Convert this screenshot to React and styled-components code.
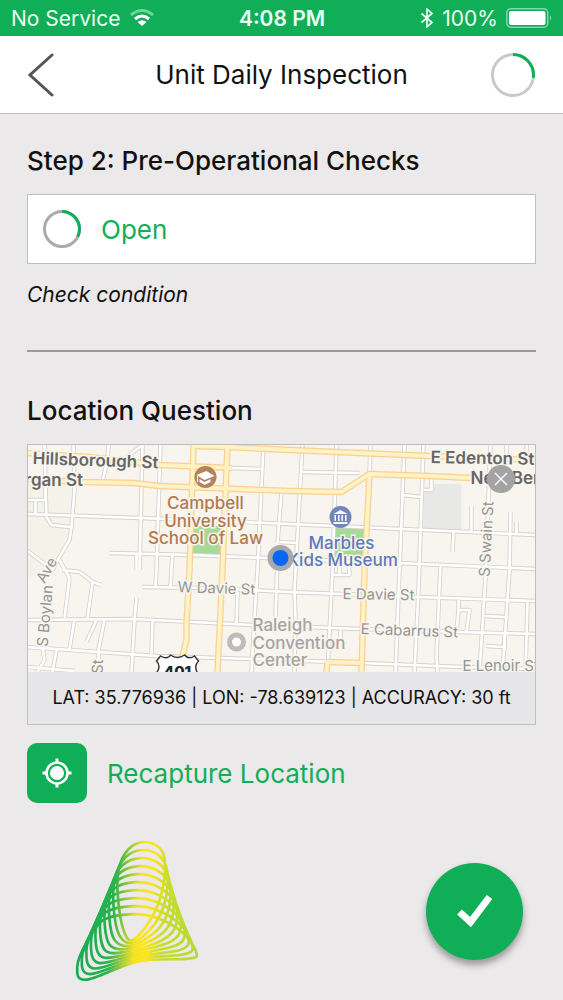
import React from "react";
import styled, { createGlobalStyle } from "styled-components";

const GREEN = "#11ae58";

const streets = [
  "M45 445L46 487L47 517L52 525L71 527",
  "M74 445L75 490L72 527L70 540L60 557L53 570",
  "M109 445L108 460L103 481",
  "M143 445L140 570M143 445L127 457",
  "M161 445L157 570L156 587",
  "M173 553L171 587",
  "M264 445L258 570L255 617L252 672",
  "M282 492L278 543M278 560L276 617",
  "M232 468L263 469",
  "M27 514L167 519L290 524L470 532L536 535",
  "M110 553L193 555L267 558L398 563L536 569",
  "M27 500H46V487M36 500V514M27 550L53 570",
  "M27 620L133 619L253 625L360 629L460 632L536 634",
  "M27 647L157 656L253 659L362 663L463 667L536 669",
  "M27 667L75 671",
  "M143 587L207 588L290 592L343 594L417 597L536 601",
  "M60 560L70 578L65 618M63 570L80 572L93 582L102 585M93 583L88 618",
  "M75 619L70 649M97 620L87 642M105 620L99 650V672",
  "M137 555V570M137 598L135 620L132 672M153 621L152 654",
  "M43 648L45 660L38 672M57 650L53 672",
  "M238 592L237 623",
  "M303 445L295 590L296 620L295 672",
  "M337 445L333 570L328 672",
  "M371 445L370 474",
  "M405 445L400 570L396 672",
  "M424 445L419 590L415 672",
  "M441 565L437 655L438 672",
  "M424 490H432V477M403 495L422 497",
  "M303 472L360 473M280 542L298 543",
  "M472 506V532M454 532L453 552M517 522V534",
  "M511 512L510 570L503 672",
  "M491 445L486 577L480 672M507 445V456M527 445V456",
  "M459 600V610H470L467 632M459 610L457 632",
  "M485 616L506 617M487 646L504 647M505 634V650",
  "M528 602L526 672",
  "M333 575H350L349 561M340 561V575M341 630V638",
];

const avenues = [
  "M27 453L90 457L160 465L232 468",
  "M193 446L228 447L290 450L430 456L536 460",
  "M27 479L83 482L135 483L160 486L290 491L342 492L370 474L430 476L472 478L536 480",
  "M194 445L190 570L187 623V640L182 660L178 672",
  "M228 445L223 570L218 672",
  "M370 474L365 570L362 672",
  "M327 662L362 663M328 662L327 672",
];

// corner points of the first and last rings of the logo
const innerRing = [
  [252, 53], [298, 70], [315, 115], [305, 205], [272, 285],
  [218, 348], [190, 315], [174, 220], [176, 135], [205, 75],
];
const outerRing = [
  [205, 270], [285, 279], [368, 325], [409, 385], [385, 403],
  [235, 411], [78, 466], [52, 425], [82, 350], [128, 288],
];

function ringPath(t) {
  const p = innerRing.map(([x, y], i) => [
    x + (outerRing[i][0] - x) * t,
    y + (outerRing[i][1] - y) * t,
  ]);
  const n = p.length;
  let d = `M${p[0][0]} ${p[0][1]}`;
  for (let i = 0; i < n; i++) {
    const a = p[(i + n - 1) % n];
    const b = p[i];
    const c = p[(i + 1) % n];
    const e = p[(i + 2) % n];
    d += `C${b[0] + (c[0] - a[0]) / 6} ${b[1] + (c[1] - a[1]) / 6} ${c[0] - (e[0] - b[0]) / 6} ${c[1] - (e[1] - b[1]) / 6} ${c[0]} ${c[1]}`;
  }
  return d + "Z";
}

function Progress({ size, value, track, thickness }) {
  const r = (size - thickness) / 2;
  const length = 2 * Math.PI * r;
  return (
    <svg width={size} height={size} viewBox={`0 0 ${size} ${size}`} fill="none" strokeWidth={thickness}>
      <circle cx={size / 2} cy={size / 2} r={r} stroke={track} />
      <circle
        cx={size / 2}
        cy={size / 2}
        r={r}
        stroke={GREEN}
        strokeDasharray={`${length * value} ${length}`}
        transform={`rotate(-90 ${size / 2} ${size / 2})`}
      />
    </svg>
  );
}

function Logo() {
  return (
    <svg width="160" height="150" viewBox="0 35 480 450" fill="none" role="img" aria-label="Logo">
      <defs>
        <linearGradient id="rings" gradientUnits="userSpaceOnUse" x1="50" y1="400" x2="410" y2="432">
          <stop offset="0" stopColor="#12ad52" />
          <stop offset="0.26" stopColor="#28b24b" />
          <stop offset="0.38" stopColor="#a0ce38" />
          <stop offset="0.47" stopColor="#f6e31e" />
          <stop offset="0.57" stopColor="#fbe41c" />
          <stop offset="0.7" stopColor="#c6dd2c" />
          <stop offset="1" stopColor="#b5d838" />
        </linearGradient>
      </defs>
      <g stroke="url(#rings)" strokeWidth="8">
        {Array.from({ length: 10 }, (_, i) => (
          <path key={i} d={ringPath(i / 9)} />
        ))}
      </g>
    </svg>
  );
}

function CityMap() {
  return (
    <MapArt viewBox="28 445 508 227" preserveAspectRatio="xMidYMid slice" role="img" aria-label="Map of downtown Raleigh">
      <rect x="28" y="445" width="508" height="227" fill="#f8f4ee" />
      <path d="M28 480H75L70 530L58 560L28 580Z" fill="#f3f3e9" />
      <path d="M434 484H462V530H424V492H434Z" fill="#e8e9e6" />
      <path d="M193 526H222V554H192ZM334 528H365V557H333Z" fill="#a7da98" />
      <g fill="none" strokeLinejoin="round">
        {streets.map((d) => <path key={d} d={d} stroke="#d5d2ce" strokeWidth="4.4" />)}
        {streets.map((d) => <path key={d} d={d} stroke="#fff" strokeWidth="2.6" />)}
        {avenues.map((d) => <path key={d} d={d} stroke="#fbcf91" strokeWidth="6.4" />)}
        {avenues.map((d) => <path key={d} d={d} stroke="#fff3c4" strokeWidth="4" />)}
      </g>

      <Label $color="#666" $weight={600} $size={17}>
        <text x="33" y="464" transform="rotate(2 33 464)">Hillsborough St</text>
        <text x="25" y="486">rgan St</text>
        <text x="431" y="463" transform="rotate(1 431 463)">E Edenton St</text>
        <text x="471" y="484">New Bern</text>
      </Label>
      <Label $color="#949494" $size={15}>
        <text x="178" y="592" transform="rotate(2 178 592)">W Davie St</text>
        <text x="343" y="599" transform="rotate(1 343 599)">E Davie St</text>
        <text x="361" y="634" transform="rotate(2 361 634)">E Cabarrus St</text>
        <text x="463" y="671">E Lenoir St</text>
        <text transform="translate(490 577) rotate(-87)">S Swain St</text>
        <text transform="translate(48 647) rotate(-85)">S Boylan</text>
        <text transform="translate(45 584) rotate(-60)">Ave</text>
        <text transform="translate(103 674) rotate(-88)">St</text>
      </Label>
      <Label $color="#a5a4a2" $weight={500} $size={17}>
        <text x="253" y="631">Raleigh</text>
        <text x="253" y="649">Convention</text>
        <text x="253" y="666">Center</text>
      </Label>
      <Label $color="#b27a4e" $weight={500} $size={17} textAnchor="middle">
        <text x="206" y="509">Campbell</text>
        <text x="206" y="527">University</text>
        <text x="206" y="544">School of Law</text>
      </Label>
      <Label $color="#5f79bb" $weight={500} $size={17} textAnchor="middle">
        <text x="342" y="549">Marbles</text>
        <text x="343" y="566">Kids Museum</text>
      </Label>

      <circle cx="206" cy="477" r="11" fill="#b5835b" />
      <path d="M197 475L207 471L215 476L205 480ZM200 479L205 482L211 479V482L205 485L200 482Z" fill="#fff" />
      <path d="M198 476V482" stroke="#fff" />
      <circle cx="341" cy="517" r="11" fill="#7486b9" />
      <path d="M334 514L341 510L348 514ZM334 522H348V524H334ZM335 515H336.500V521H335ZM338.500 515H340V521H338.500ZM342 515H343.500V521H342ZM345.500 515H347V521H345.500Z" fill="#fff" />
      <circle cx="237" cy="642" r="7" fill="#fff" stroke="#bdbcba" strokeWidth="5" />
      <path d="M161 656Q168 660 171 655Q178 660 185 655Q189 660 195 656L199 661Q194 666 198 673H157Q162 666 157 661Z" fill="#fff" stroke="#333" strokeWidth="1.4" />
      <text x="178" y="677" textAnchor="middle" fontSize="15" fontWeight="800" fill="#222">401</text>
      <circle cx="281" cy="558" r="13" fill="#a7a9aa" />
      <circle cx="281" cy="558" r="8" fill="#0a66f5" />
    </MapArt>
  );
}

export default function App() {
  return (
    <Page>
      <GlobalStyle />
      <StatusBar>
        <StatusGroup>
          No Service
          <svg width="24" height="18" viewBox="0 0 24 18" fill="none">
            <path d="M1 6Q12 -3 23 6" stroke="#72d39d" strokeWidth="3" />
            <path d="M5 10Q12 4 19 10" stroke="#fff" strokeWidth="3" />
            <path d="M7.500 13Q12 9.500 16.500 13L12 17Z" fill="#fff" />
          </svg>
        </StatusGroup>
        <Clock>4:08 PM</Clock>
        <StatusGroup $end>
          <svg width="14" height="20" viewBox="0 0 14 20" fill="none" stroke="#e9fff3" strokeWidth="1.700">
            <path d="M1.500 5.500L12 14.500L7 18.800V1.200L12 5.500L1.500 14.500" />
          </svg>
          100%
          <svg width="47" height="20" viewBox="0 0 47 20" fill="none">
            <rect x="0.800" y="0.800" width="41" height="18.400" rx="4" stroke="#7fd8a8" strokeWidth="1.500" />
            <rect x="3" y="3" width="36.500" height="14" rx="2" fill="#fff" />
            <path d="M44 7Q46.500 10 44 13Z" fill="#7fd8a8" />
          </svg>
        </StatusGroup>
      </StatusBar>

      <NavBar>
        <BackButton type="button" aria-label="Back">
          <svg width="26" height="44" viewBox="0 0 26 44" fill="none" stroke="#555" strokeWidth="3" strokeLinecap="round">
            <path d="M24 2L2 22L24 42" />
          </svg>
        </BackButton>
        <Title>Unit Daily Inspection</Title>
        <Progress size={44} value={0.27} track="#c9c9c9" thickness={3} />
      </NavBar>

      <Main>
        <Section>
          <Heading>Step 2: Pre-Operational Checks</Heading>
          <StatusButton type="button">
            <Progress size={38} value={0.32} track="#ababab" thickness={3} />
            Open
          </StatusButton>
          <Note>Check condition</Note>
        </Section>
        <Divider />
        <Section>
          <Heading>Location Question</Heading>
          <MapCard>
            <CityMap />
            <ClearButton type="button" aria-label="Clear location">
              <svg width="16" height="16" viewBox="0 0 16 16" stroke="#f4f4f4" strokeWidth="1.600">
                <path d="M2 2L14 14M14 2L2 14" />
              </svg>
            </ClearButton>
            <Coordinates>LAT: 35.776936 | LON: -78.639123 | ACCURACY: 30 ft</Coordinates>
          </MapCard>
          <RecaptureButton type="button">
            <IconTile>
              <svg width="30" height="30" viewBox="0 0 30 30" fill="none" stroke="#fff">
                <circle cx="15" cy="15" r="10.500" strokeWidth="2.600" />
                <circle cx="15" cy="15" r="7" fill="#fff" stroke="none" />
                <path d="M15 0.500V5M15 25V29.500M0.500 15H5M25 15H29.500" strokeWidth="3" />
              </svg>
            </IconTile>
            Recapture Location
          </RecaptureButton>
        </Section>
        <Footer>
          <Logo />
          <SubmitButton type="button" aria-label="Submit">
            <svg width="36" height="34" viewBox="0 0 36 34" fill="none" stroke="#fff" strokeWidth="7">
              <path d="M2.500 18L13.500 28L32.500 3" />
            </svg>
          </SubmitButton>
        </Footer>
      </Main>
    </Page>
  );
}

const GlobalStyle = createGlobalStyle`
  * {
    box-sizing: border-box;
  }

  body {
    margin: 0;
    background: #ebe9ea;
    font-family: Inter, "Liberation Sans", sans-serif;
    color: #111;
  }

  button {
    border: none;
    padding: 0;
    background: none;
    font: inherit;
    cursor: pointer;
  }

  svg {
    display: block;
    flex-shrink: 0;
  }
`;

const Page = styled.div`
  min-height: 100vh;
  display: flex;
  flex-direction: column;
`;

const StatusBar = styled.div`
  display: grid;
  grid-template-columns: 1fr auto 1fr;
  align-items: center;
  height: 36px;
  padding: 0 10px 0 11px;
  background: ${GREEN};
  color: #e9fff3;
  font-size: 21px;
`;

const StatusGroup = styled.div`
  display: flex;
  align-items: center;
  justify-content: ${({ $end }) => ($end ? "flex-end" : "flex-start")};
  gap: ${({ $end }) => ($end ? "8px" : "10px")};
  white-space: nowrap;
`;

const Clock = styled.span`
  font-weight: 600;
`;

const NavBar = styled.header`
  display: flex;
  align-items: center;
  justify-content: space-between;
  height: 78px;
  padding: 0 28px;
  background: #fff;
  border-bottom: 1px solid #bdbcbb;
`;

const BackButton = styled.button`
  width: 44px;
`;

const Title = styled.h1`
  margin: 0;
  font-size: 26px;
  font-weight: 400;
`;

const Main = styled.main`
  flex: 1;
  display: flex;
  flex-direction: column;
  padding: 32px 27px 14px;
`;

const Section = styled.section`
  display: flex;
  flex-direction: column;
`;

const Heading = styled.h2`
  margin: 0 0 18px;
  font-size: 26px;
  line-height: 30px;
  font-weight: 500;
`;

const StatusButton = styled.button`
  display: flex;
  align-items: center;
  gap: 20px;
  height: 70px;
  padding: 0 15px;
  border: 1px solid #bebdbf;
  background: #fff;
  color: ${GREEN};
  font-size: 26px;
`;

const Note = styled.p`
  margin: 18px 0 0;
  font-size: 21px;
  line-height: 26px;
  font-style: italic;
`;

const Divider = styled.hr`
  width: 100%;
  height: 2px;
  margin: 42px 0 44px;
  border: none;
  background: #9b9a9b;
`;

const MapCard = styled.div`
  position: relative;
  border: 1px solid #bebdbf;
  background: #e6e5e7;
`;

const MapArt = styled.svg`
  width: 100%;
  height: 227px;
`;

const Label = styled.g`
  fill: ${({ $color }) => $color};
  font-size: ${({ $size }) => $size}px;
  font-weight: ${({ $weight }) => $weight || 400};
  stroke: #f8f4ee;
  stroke-width: 3px;
  paint-order: stroke;
`;

const ClearButton = styled.button`
  position: absolute;
  top: 20px;
  right: 20px;
  width: 28px;
  height: 28px;
  display: grid;
  place-items: center;
  border-radius: 50%;
  background: #a3a3a3;
`;

const Coordinates = styled.p`
  margin: 0;
  padding: 14px 8px;
  font-size: 18px;
  line-height: 24px;
  text-align: center;
`;

const RecaptureButton = styled.button`
  display: flex;
  align-items: center;
  align-self: flex-start;
  gap: 20px;
  margin-top: 18px;
  color: ${GREEN};
  font-size: 26px;
`;

const IconTile = styled.span`
  display: grid;
  place-items: center;
  width: 60px;
  height: 60px;
  border-radius: 10px;
  background: ${GREEN};
`;

const Footer = styled.footer`
  display: flex;
  align-items: center;
  justify-content: space-between;
  margin-top: auto;
  padding: 0 13px 0 33px;
`;

const SubmitButton = styled.button`
  display: grid;
  place-items: center;
  width: 97px;
  height: 97px;
  border-radius: 50%;
  background: ${GREEN};
  box-shadow: 0 5px 7px rgba(0, 0, 0, 0.35);
`;
